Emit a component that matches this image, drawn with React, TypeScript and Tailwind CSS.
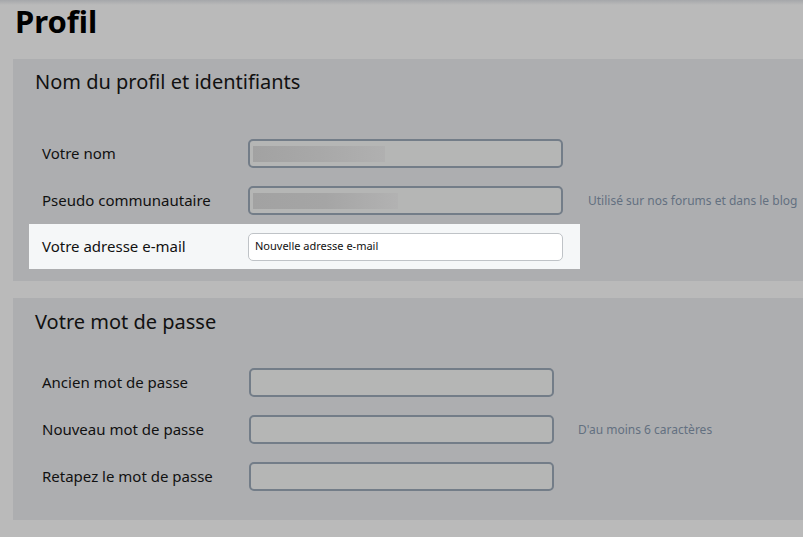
export default function App() {
  const font = { fontFamily: '"Segoe UI", "Noto Sans", "Open Sans", sans-serif' };
  const input = "h-[29px] rounded-[5px] border-2 border-[#737d88] bg-[#b5b6b5]";
  return (
    <div className="w-[803px] h-[537px] overflow-hidden bg-[#bababa] text-[#111]" style={font}>
      <div className="h-[5px] bg-gradient-to-b from-[#a5a7aa] to-[#bababa]" />
      <h1 className="pl-[15px] text-[31px] font-bold leading-[38px] -mt-[3px] text-black">Profil</h1>
      <div className="mt-[19px] ml-[13px] h-[222px] bg-[#adaeb0] pt-[10px]">
        <h2 className="pl-[22px] text-[20px] leading-[26px]">Nom du profil et identifiants</h2>
        <div className="mt-[35px] flex items-center h-[47px] pl-[29px]">
          <span className="w-[206px] text-[15px]">Votre nom</span>
          <div className={`${input} w-[315px] flex items-center pl-[3px]`}>
            <div className="w-[132px] h-[16px] bg-gradient-to-r from-[#a2a2a2] via-[#a8a8a8] to-[#b0b0b0]" />
          </div>
        </div>
        <div className="flex items-center h-[47px] pl-[29px]">
          <span className="w-[206px] text-[15px]">Pseudo communautaire</span>
          <div className={`${input} w-[315px] flex items-center pl-[3px]`}>
            <div className="w-[145px] h-[16px] bg-gradient-to-r from-[#a2a2a2] via-[#a5a5a5] to-[#b2b2b2]" />
          </div>
          <span className="ml-[25px] text-[12px] text-[#637080]">Utilisé sur nos forums et dans le blog</span>
        </div>
        <div className="flex items-center h-[45px] ml-[16px] pl-[13px] w-[551px] bg-[#f5f7f8]">
          <span className="w-[206px] text-[15px]">Votre adresse e-mail</span>
          <div className="h-[28px] w-[315px] rounded-[5px] border border-[#bfc3c7] bg-white flex items-center pl-[6px] text-[11px]">Nouvelle adresse e-mail</div>
        </div>
      </div>
      <div className="mt-[17px] ml-[13px] h-[222px] bg-[#adaeb0] pt-[11px]">
        <h2 className="pl-[22px] text-[20px] leading-[26px]">Votre mot de passe</h2>
        {[
          ["Ancien mot de passe", ""],
          ["Nouveau mot de passe", "D'au moins 6 caractères"],
          ["Retapez le mot de passe", ""],
        ].map(([l, h], i) => (
          <div key={i} className={`flex items-center h-[47px] pl-[29px] ${i === 0 ? "mt-[24px]" : ""}`}>
            <span className="w-[207px] text-[15px]">{l}</span>
            <div className={`${input} w-[305px]`} />
            {h && <span className="ml-[24px] text-[12px] text-[#637080]">{h}</span>}
          </div>
        ))}
      </div>
    </div>
  );
}
